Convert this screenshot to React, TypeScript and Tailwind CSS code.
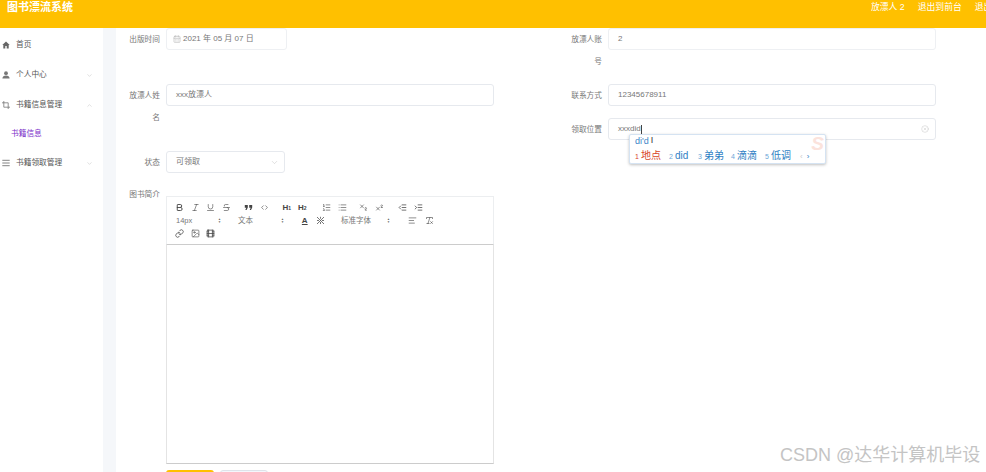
import React from "react";
import {
  Bold, Italic, Underline, Strikethrough, Code, List, ListOrdered, Subscript, Superscript,
  IndentDecrease, IndentIncrease, AlignLeft, RemoveFormatting, Link, Image, Film,
  ChevronDown, ChevronUp, CalendarDays, CircleX,
} from "lucide-react";

const font = { fontFamily: '"Liberation Sans","Noto Sans CJK SC",sans-serif' };

function Label({ children }: { children: React.ReactNode }) {
  return <div className="w-[32px] mr-[6px] pt-px shrink-0 text-right text-[7.7px] leading-[22px] text-[#777] break-all">{children}</div>;
}

function Box({ className, children }: { className: string; children?: React.ReactNode }) {
  return (
    <div className={`h-[22px] rounded-[3px] border border-[#e6e9ee] bg-white flex items-center text-[8px] text-[#777] ${className}`}>
      {children}
    </div>
  );
}

function NavItem({ icon, label, chev, className }: { icon: React.ReactNode; label: string; chev?: "up" | "down"; className: string }) {
  return (
    <div className={`flex items-center pl-[2px] pr-[10px] text-[7.7px] text-[#555] ${className}`}>
      <span className="w-[14px] shrink-0 flex">{icon}</span>
      <span className="flex-1">{label}</span>
      {chev === "down" && <ChevronDown size={7} strokeWidth={1.5} className="text-[#bbb]" />}
      {chev === "up" && <ChevronUp size={7} strokeWidth={1.5} className="text-[#bbb]" />}
    </div>
  );
}

function Tool({ children, className = "" }: { children?: React.ReactNode; className?: string }) {
  return <span className={`w-[15.5px] h-[13px] flex items-center justify-center text-[#444] shrink-0 ${className}`}>{children}</span>;
}

function Picker({ label, className }: { label: string; className: string }) {
  return (
    <span className={`h-[13px] flex items-center justify-between text-[7.5px] text-[#777] shrink-0 ${className}`}>
      <span>{label}</span>
      <span className="flex flex-col items-center text-[#666] leading-none">
        <span className="text-[3px] leading-[3px]">▲</span>
        <span className="text-[3px] leading-[3px]">▼</span>
      </span>
    </span>
  );
}

export default function App() {
  const s = 9;
  const w = 1.6;
  return (
    <div className="relative w-[986px] h-[472px] overflow-hidden bg-white" style={font}>
      <header className="h-[28px] bg-[#ffc000] flex justify-between text-white overflow-hidden">
        <div className="pl-[7px] text-[11px] leading-[14px] font-bold">图书漂流系统</div>
        <div className="flex gap-[13px] text-[8.8px] leading-[14px] w-[115px] shrink-0 whitespace-nowrap overflow-hidden">
          <span>放漂人 2</span>
          <span>退出到前台</span>
          <span>退出登录</span>
        </div>
      </header>

      <div className="flex h-[444px]">
        <aside className="w-[103px] shrink-0 bg-white pt-[7px]">
          <NavItem className="h-[20px] mb-[10px]" icon={
            <svg width="8" height="8" viewBox="0 0 8 8" fill="#666"><path d="M4 .6 .3 4h1v3.4h2V5h1.4v2.4h2V4h1z" /></svg>
          } label="首页" />
          <NavItem className="h-[20px] mb-[10px]" icon={
            <svg width="8" height="8" viewBox="0 0 8 8" fill="#777"><circle cx="4" cy="2.2" r="1.9" /><path d="M.4 7.6c0-2 1.6-3 3.6-3s3.6 1 3.6 3z" /></svg>
          } label="个人中心" chev="down" />
          <NavItem className="h-[20px] mb-[9px]" icon={
            <svg width="8" height="8" viewBox="0 0 8 8" fill="none" stroke="#777" strokeWidth="0.8"><path d="M1.8 0v6.2H8M0 1.8h6.2V8" /></svg>
          } label="书籍信息管理" chev="up" />
          <div className="h-[20px] mb-[9px] pl-[11px] flex items-center text-[7.7px] text-[#7b2fc9]">书籍信息</div>
          <NavItem className="h-[20px]" icon={
            <svg width="8" height="8" viewBox="0 0 8 8" fill="none" stroke="#777" strokeWidth="0.9"><path d="M.3 1.3h7.4M.3 4h7.4M.3 6.7h7.4" /></svg>
          } label="书籍领取管理" chev="down" />
        </aside>
        <div className="w-[13px] shrink-0 bg-[#f5f7fa]" />

        <main className="flex-1 flex min-w-0 pl-[8px]">
          <section className="w-[446px] shrink-0 flex flex-col pl-[4px]">
            <div className="flex h-[56px] shrink-0">
              <Label>出版时间</Label>
              <Box className="w-[121px] px-[6px] gap-[2px] border-[#eef0f3]">
                <CalendarDays size={8} className="text-[#bbb]" />
                <span>2021 年 05 月 07 日</span>
              </Box>
            </div>
            <div className="flex h-[67px] shrink-0">
              <Label>放漂人姓名</Label>
              <Box className="w-[328px] px-[9px]">xxx放漂人</Box>
            </div>
            <div className="flex h-[45px] shrink-0">
              <Label>状态</Label>
              <Box className="w-[119px] pl-[9px] pr-[5px] justify-between">
                <span>可领取</span>
                <ChevronDown size={9} strokeWidth={1.2} className="text-[#bbb]" />
              </Box>
            </div>
            <div className="flex shrink-0">
              <div className="w-[32px] mr-[6px] -mt-[7px] shrink-0 text-right text-[7.7px] leading-[12px] text-[#777]">图书简介</div>
              <div className="w-[328px] shrink-0">
                <div className="h-[49px] border border-[#eceef0] border-b-[#ccc] pl-[5px] pt-[4px] text-[#444]">
                  <div className="flex items-center h-[13px]">
                    <Tool><Bold size={s} strokeWidth={2.4} /></Tool>
                    <Tool><Italic size={s} strokeWidth={w} /></Tool>
                    <Tool><Underline size={s} strokeWidth={w} /></Tool>
                    <Tool className="mr-[7px]"><Strikethrough size={s} strokeWidth={w} /></Tool>
                    <Tool>
                      <svg width="9" height="9" viewBox="0 0 9 9" fill="#444"><path d="M.8 2h3v2.6L2.6 7H1.3l1-2.2H.8zM5.2 2h3v2.6L7 7H5.7l1-2.2H5.2z" /></svg>
                    </Tool>
                    <Tool className="mr-[7px]"><Code size={7} strokeWidth={2} /></Tool>
                    <Tool><span className="text-[8px] font-bold leading-none">H<span className="text-[5px]">1</span></span></Tool>
                    <Tool className="mr-[9px]"><span className="text-[8px] font-bold leading-none">H<span className="text-[5px]">2</span></span></Tool>
                    <Tool><ListOrdered size={s} strokeWidth={w} /></Tool>
                    <Tool className="mr-[6px]"><List size={s} strokeWidth={w} /></Tool>
                    <Tool><Subscript size={s} strokeWidth={w} /></Tool>
                    <Tool className="mr-[8px]"><Superscript size={s} strokeWidth={w} /></Tool>
                    <Tool><IndentDecrease size={s} strokeWidth={2} /></Tool>
                    <Tool><IndentIncrease size={s} strokeWidth={2} /></Tool>
                  </div>
                  <div className="flex items-center h-[13px]">
                    <Picker className="w-[49px] pl-[4px] mr-[17px]" label="14px" />
                    <Picker className="w-[46px] mr-[13px]" label="文本" />
                    <Tool><span className="text-[8px] underline font-bold">A</span></Tool>
                    <Tool className="mr-[13px]">
                      <svg width="9" height="9" viewBox="0 0 9 9" fill="none" stroke="#555" strokeWidth="0.8"><path d="M1 1l7 7M8 1 1 8M4.5.8v2M4.5 6v2M1 4.5h2M6 4.5h2" /></svg>
                    </Tool>
                    <Picker className="w-[49px] mr-[15px]" label="标准字体" />
                    <Tool className="mr-[5px]"><AlignLeft size={s} strokeWidth={w} /></Tool>
                    <Tool className="-ml-[4px]"><RemoveFormatting size={s} strokeWidth={w} /></Tool>
                  </div>
                  <div className="flex items-center h-[13px]">
                    <Tool><Link size={s} strokeWidth={2} /></Tool>
                    <Tool><Image size={s} strokeWidth={w} /></Tool>
                    <Tool><Film size={s} strokeWidth={2} /></Tool>
                  </div>
                </div>
                <div className="h-[219px] border border-[#e4e4e4] border-t-0 border-b-[#ccc]" />
                <div className="flex gap-[6px] mt-[6px]">
                  <div className="w-[48px] h-[20px] rounded-[3px] bg-[#ffc000]" />
                  <div className="w-[48px] h-[20px] rounded-[3px] bg-[#f4f7fc] border border-[#dfe3ea]" />
                </div>
              </div>
            </div>
          </section>

          <section className="flex flex-col">
            <div className="flex h-[56px] shrink-0">
              <Label>放漂人账号</Label>
              <Box className="w-[328px] px-[9px] border-[#eef0f3]">2</Box>
            </div>
            <div className="flex h-[34px] shrink-0">
              <Label>联系方式</Label>
              <Box className="w-[328px] px-[9px]">12345678911</Box>
            </div>
            <div className="flex shrink-0">
              <Label>领取位置</Label>
              <Box className="w-[328px] pl-[9px] pr-[6px] justify-between">
                <span className="flex items-center">xxxdid<span className="w-px h-[9px] bg-[#444]" /></span>
                <CircleX size={8} strokeWidth={1.2} className="text-[#bbb]" />
              </Box>
            </div>
          </section>
        </main>
      </div>

      <div className="absolute left-[629px] top-[134px] w-[197px] h-[30px] bg-white rounded-[2px] border border-[#d5e3f2] shadow-[0_1px_3px_rgba(0,0,0,0.25)] overflow-hidden px-[5px]">
        <div className="absolute right-[1px] -top-[1px] text-[19px] leading-[19px] italic font-bold text-[#fbe3dc]">S</div>
        <div className="relative text-[9px] leading-[10px] text-[#3c84c8] flex items-center h-[11px]">
          di'd
          <span className="ml-[2px] text-[#333] text-[9px] leading-none">I</span>
        </div>
        <div className="relative flex items-baseline text-[10px] leading-[14px] text-[#2f7fc4] mt-[3px] whitespace-nowrap">
          <span className="text-[#d8462b] w-[34px]"><span className="text-[7px] mr-[2px]">1</span>地点</span>
          <span className="w-[29px]"><span className="text-[7px] text-[#6ea6d8] mr-[2px]">2</span>did</span>
          <span className="w-[33px]"><span className="text-[7px] text-[#6ea6d8] mr-[2px]">3</span>弟弟</span>
          <span className="w-[34px]"><span className="text-[7px] text-[#6ea6d8] mr-[2px]">4</span>滴滴</span>
          <span className="w-[35px]"><span className="text-[7px] text-[#6ea6d8] mr-[2px]">5</span>低调</span>
          <span className="text-[8px] text-[#ccc] mr-[4px]">‹</span>
          <span className="text-[8px] text-[#2f7fc4]">›</span>
        </div>
      </div>

      <div className="absolute left-[780px] top-[444px] text-[18px] leading-[22px] text-[#c4c4c4] whitespace-nowrap">
        CSDN @达华计算机毕设
      </div>
    </div>
  );
}
